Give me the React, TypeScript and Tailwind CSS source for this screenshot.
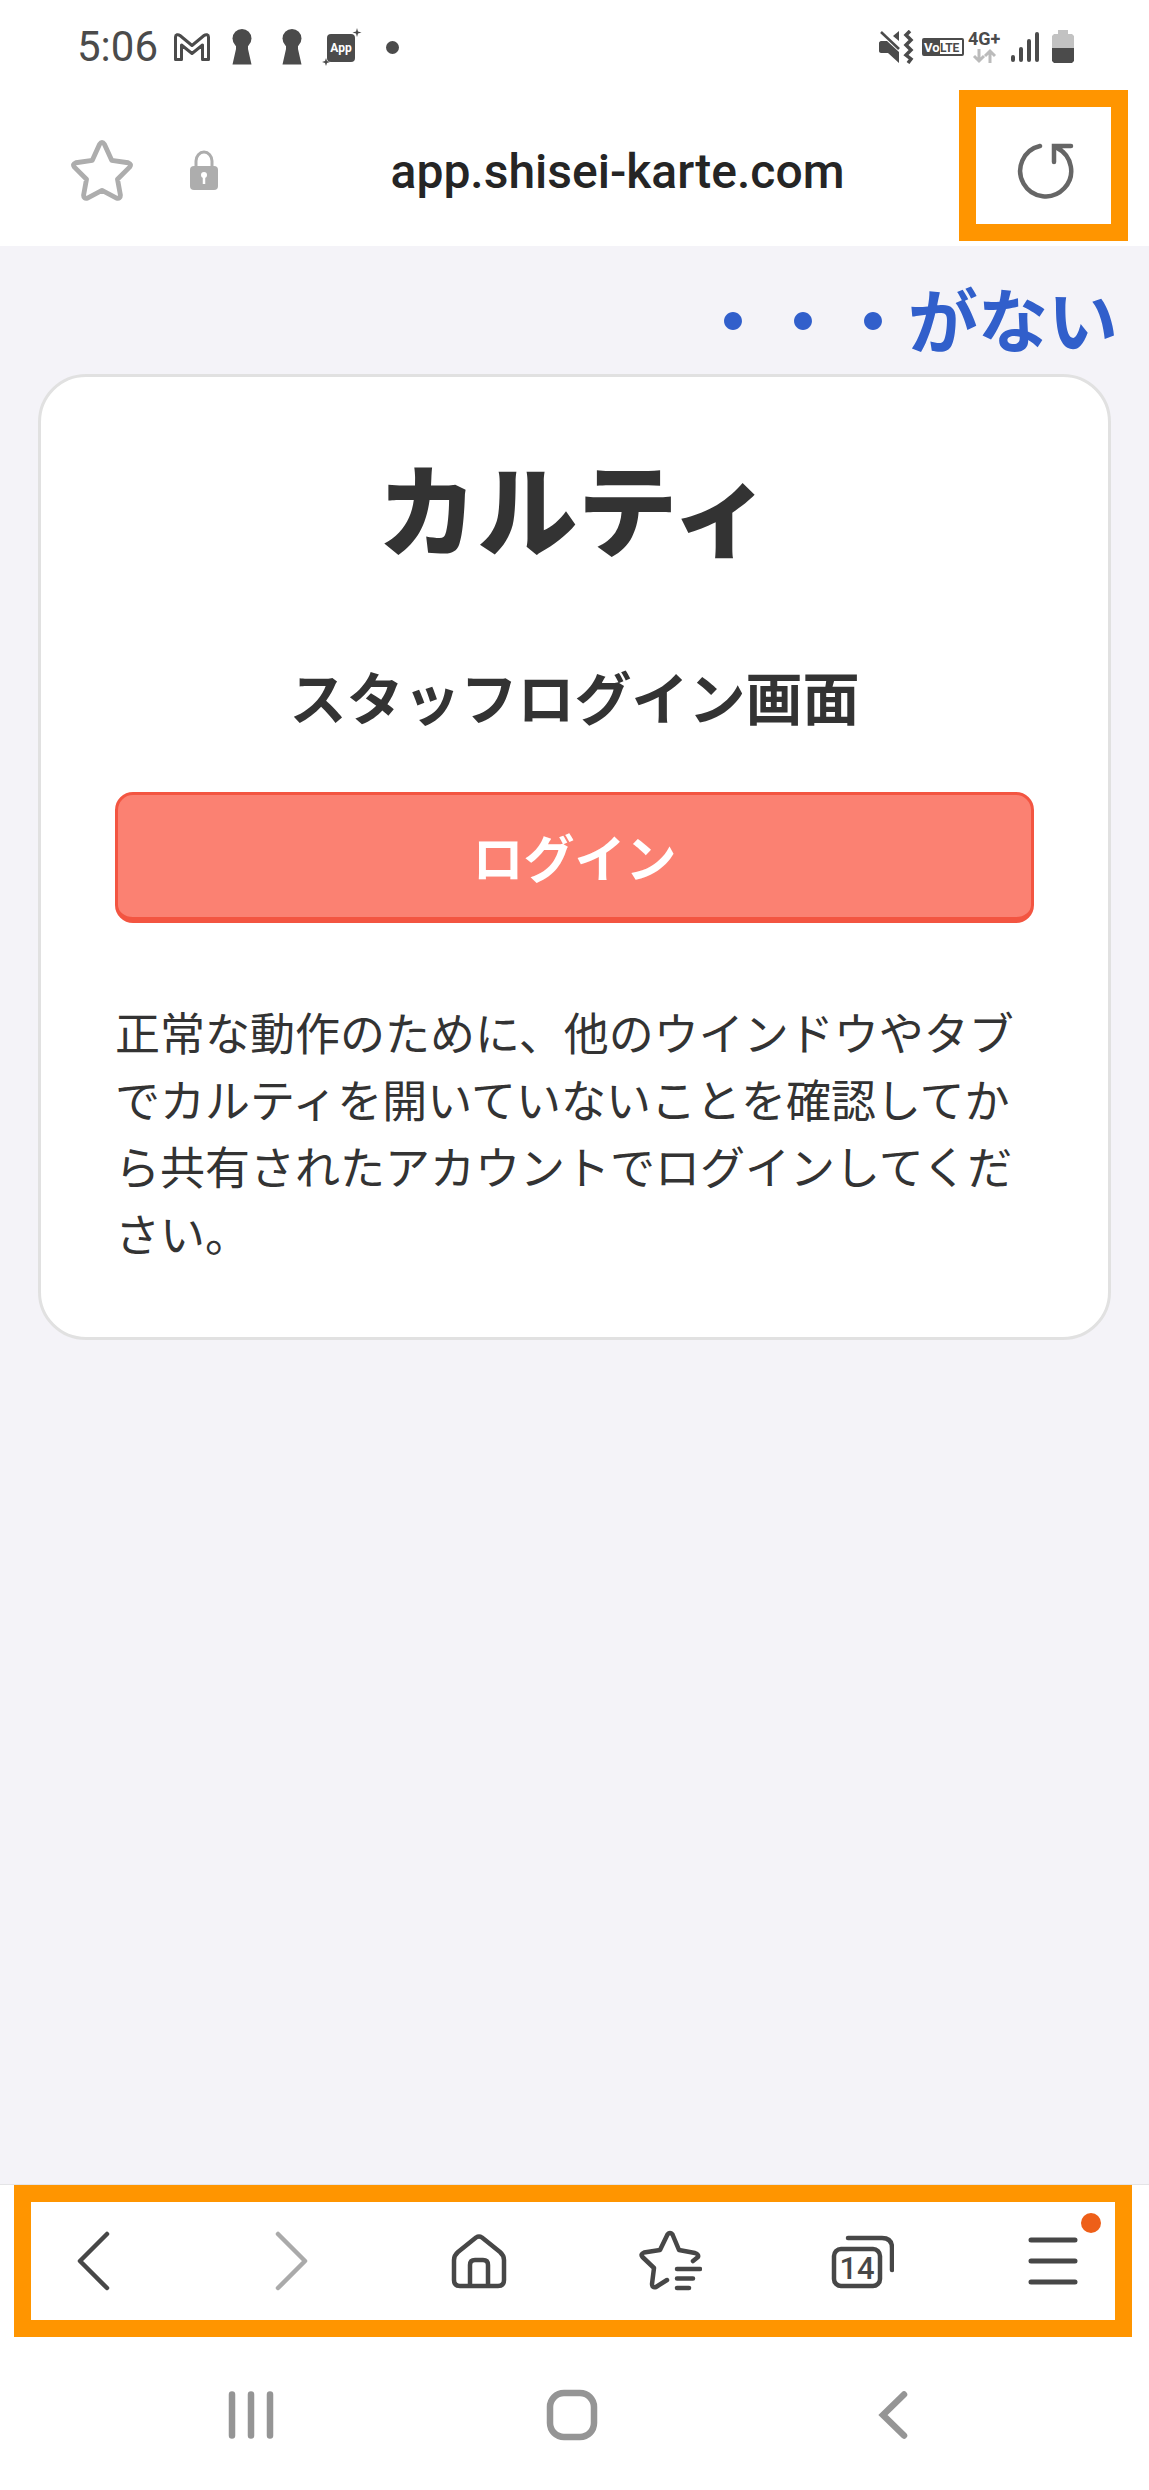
import type { ReactNode } from 'react';

interface ToolbarItem {
  label: string;
  icon: ReactNode;
}

const KeyholeIcon = () => (
  <svg width="20" height="36" viewBox="0 0 20 36" fill="#4b4b4b">
    <circle cx="10" cy="9.5" r="9.5" />
    <path d="M4 13h12v7l3.5 15.5h-19L4 20z" />
  </svg>
);

const notifications = [
  {
    name: 'mail',
    icon: (
      <svg width="36" height="28" viewBox="0 0 36 28" fill="none" stroke="#4b4b4b" strokeWidth="3" strokeLinejoin="round">
        <path d="M1.5 4v22.5h6V12l10.5 8.500L28.500 12v14.500h6V4c0-2.500-2.500-3-4.500-1.500L18 12.500 6 2.500C4 1 1.500 1.500 1.500 4z" />
      </svg>
    ),
  },
  { name: 'keyhole-1', icon: <KeyholeIcon /> },
  { name: 'keyhole-2', icon: <KeyholeIcon /> },
  {
    name: 'app',
    icon: (
      <svg width="40" height="40" viewBox="0 0 40 40" fill="#4b4b4b">
        <rect x="5" y="7" width="28" height="28" rx="4" />
        <path d="M35 1l1 3.500 3.500 1-3.500 1-1 3.500-1-3.500-3.500-1 3.500-1zM4 31l1 3 3 1-3 1-1 3-1-3-3-1 3-1z" />
        <text x="19" y="25" textAnchor="middle" fill="#fff" fontSize="12" fontWeight="700" fontFamily="Roboto, sans-serif">
          App
        </text>
      </svg>
    ),
  },
  { name: 'more', icon: <span className="size-[13px] rounded-full bg-[#4b4b4b]" /> },
];

const StatusBar = () => {
  return (
    <div className="flex h-[94px] items-center justify-between pl-[77px] pr-[75px] text-[#4b4b4b]">
      <div className="flex items-center">
        <span className="w-[90px] text-[42px] leading-none">5:06</span>
        {notifications.map((n) => (
          <span key={n.name} className="flex w-[50px] items-center justify-center">
            {n.icon}
          </span>
        ))}
      </div>
      <div className="flex items-center gap-1">
        <svg width="40" height="34" viewBox="0 0 40 34" fill="#4b4b4b">
          <path d="M1 13c0-1 1-2 2-2h6l12 11v11L10 23H3c-1 0-2-1-2-2z" />
          <path d="M21 1v10l-6-5z" />
          <path d="M3 2l18 17" stroke="#4b4b4b" strokeWidth="2.500" />
          <path d="M32 1l-4 4 5 5-5 5 5 5-5 5 5 4-3 4" fill="none" stroke="#4b4b4b" strokeWidth="3.500" />
        </svg>
        <svg width="42" height="18" viewBox="0 0 42 18" fontFamily="Roboto, sans-serif" fontWeight="700" fontSize="13">
          <rect x="1" y="1" width="40" height="16" rx="1" fill="#fff" stroke="#4b4b4b" strokeWidth="2" />
          <path d="M1 1h17v16H1z" fill="#4b4b4b" />
          <text x="2" y="14" fill="#fff">Vo</text>
          <text x="18" y="14" fill="#4b4b4b" fontSize="12">LTE</text>
        </svg>
        <svg width="36" height="40" viewBox="0 0 36 40">
          <text x="0" y="18" fill="#4b4b4b" fontFamily="Roboto, sans-serif" fontWeight="700" fontSize="18">4G+</text>
          <path d="M11 22v12M6 29l5 5 5-5M22 36V24M17 29l5-5 5 5" fill="none" stroke="#bbb" strokeWidth="3" />
        </svg>
        <svg width="40" height="32" viewBox="0 0 40 32" stroke="#4b4b4b" strokeWidth="4" strokeLinecap="round">
          <path d="M5 26v3M13 18v11M21 10v19M29 3v26" />
        </svg>
        <svg width="22" height="34" viewBox="0 0 22 34">
          <path d="M6 0h10v4h4l2 2v13H0V6l2-2h4z" fill="#c2c2c2" />
          <path d="M0 18h22v13l-2 2H2l-2-2z" fill="#4b4b4b" />
        </svg>
      </div>
    </div>
  );
};

const AddressBar = () => {
  return (
    <div className="flex h-[152px] items-center justify-between pl-[71px]">
      <div className="flex w-[205px] items-center gap-[56px]">
        <button type="button" aria-label="ブックマークに追加">
          <svg width="62" height="62" viewBox="0 0 64 64" fill="none" stroke="#adadad" strokeWidth="5" strokeLinejoin="round">
            <path d="M29.500 5.500q2.500-4 5 0L42 22l17 2.500q4 1.500 1.500 4.500L48 41.500l3 16.500q0 4-4 3L32 53l-15 8q-4 1-4-3l3-16.500L3.500 29Q1 26 5 24.500L22 22z" />
          </svg>
        </button>
        <svg width="30" height="40" viewBox="0 0 30 40" fill="none">
          <path d="M7 18v-7a8 9 0 0 1 16 0v7" stroke="#adadad" strokeWidth="3" />
          <rect x="1" y="16" width="28" height="24" rx="4" fill="#adadad" />
          <circle cx="15" cy="25" r="3" fill="#fff" />
          <path d="M15 25v9" stroke="#fff" strokeWidth="2.500" />
        </svg>
      </div>
      <p className="pt-1 text-[48px] font-medium leading-none text-[#252525]">app.shisei-karte.com</p>
      <div className="flex w-[190px] pb-[9px] pr-[21px]">
        <button
          type="button"
          aria-label="再読み込み"
          className="flex h-[151px] w-full items-center justify-center border-[17px] border-[#ff9500] bg-white pt-2"
        >
          <svg width="64" height="64" viewBox="0 0 64 64" fill="none" stroke="#666" strokeWidth="4.500" strokeLinecap="round">
            <path d="M29 8A25.500 25.500 0 1 0 46 10" />
            <path d="M43 24V8h17" />
            <path d="M43 8h12l-7 5z" fill="#666" stroke="none" />
          </svg>
        </button>
      </div>
    </div>
  );
};

const LoginCard = () => {
  return (
    <section className="mx-[38px] rounded-[48px] border-[3px] border-[#e1e1e1] bg-white px-[74px] pb-[71px] pt-[73px] text-[#333]">
      <h1 className="text-center text-[100px] font-black leading-[112px]">カルティ</h1>
      <h2 className="mt-[93px] text-center text-[57px] font-bold leading-[80px]">スタッフログイン画面</h2>
      <button
        type="button"
        className="mt-[57px] h-[131px] w-full rounded-[18px] border-[3px] border-b-[6px] border-[#f35541] bg-[#fb8172] text-[51px] font-bold text-white"
      >
        ログイン
      </button>
      <p className="mt-[75px] text-[45px] leading-[67px]">
        正常な動作のために、他のウインドウやタブでカルティを開いていないことを確認してから共有されたアカウントでログインしてください。
      </p>
    </section>
  );
};

const toolbarItems: ToolbarItem[] = [
  {
    label: '戻る',
    icon: <path d="M43 5L16 32l27 27" strokeWidth="4.500" />,
  },
  {
    label: '進む',
    icon: <path d="M23 5l27 27-27 27" stroke="#aaa" strokeWidth="4.500" />,
  },
  {
    label: 'ホーム',
    icon: (
      <>
        <path d="M29 8.500q3-2 6 0L53 23q4 3.500 4 8v20q0 6-6 6H13q-6 0-6-6V31q0-4.500 4-8z" />
        <path d="M23 56V36q0-5 5-5h8q5 0 5 5v20" />
      </>
    ),
  },
  {
    label: 'ブックマーク',
    icon: (
      <>
        <path d="M29 51l-11 7q-4 1-4-3l2-16L4.500 28Q2 25 6 23.500L22 21l7.500-15.500q2.500-3 5 0L41 21l16 3q4 1.500 3 4l-5 4" />
        <path d="M39 40h23M39 49.500h16M39 59h12" />
      </>
    ),
  },
  {
    label: 'タブ',
    icon: (
      <>
        <rect x="4" y="20" width="46" height="37" rx="7" />
        <path d="M18 9h34q10 0 10 10v22" />
        <text
          x="27"
          y="50"
          textAnchor="middle"
          fill="#474747"
          stroke="none"
          fontSize="31"
          fontWeight="500"
          fontFamily="Roboto, sans-serif"
        >
          14
        </text>
      </>
    ),
  },
  {
    label: 'メニュー',
    icon: <path d="M10 11h44M10 32h44M10 53h44" strokeWidth="5" />,
  },
];

const Toolbar = () => {
  return (
    <nav className="relative border-t border-[#e4e4e6] py-11">
      <div className="grid grid-cols-6">
        {toolbarItems.map((item) => (
          <button key={item.label} type="button" aria-label={item.label} className="flex justify-center">
            <span className="relative">
              <svg
                width="64"
                height="64"
                viewBox="0 0 64 64"
                fill="none"
                stroke="#474747"
                strokeWidth="4.500"
                strokeLinecap="round"
                strokeLinejoin="round"
              >
                {item.icon}
              </svg>
              {item.label === 'メニュー' && (
                <span className="absolute -right-4 -top-4 size-5 rounded-full bg-[#ee5f18]" />
              )}
            </span>
          </button>
        ))}
      </div>
      {/* highlight frame around the browser controls */}
      <div className="pointer-events-none absolute inset-y-0 left-[14px] right-[17px] border-[17px] border-[#ff9500]" />
    </nav>
  );
};

const SystemNav = () => {
  return (
    <div className="grid grid-cols-3 pb-[45px] pl-[90px] pr-[95px] pt-[48px]">
      <button type="button" aria-label="最近のアプリ" className="flex justify-center">
        <svg width="60" height="60" viewBox="0 0 60 60" fill="none" stroke="#959595" strokeWidth="6.500" strokeLinecap="round">
          <path d="M11 9.500v41M30 9.500v41M49 9.500v41" />
        </svg>
      </button>
      <button type="button" aria-label="ホーム画面" className="flex justify-center">
        <svg width="60" height="60" viewBox="0 0 60 60" fill="none" stroke="#959595" strokeWidth="6.500">
          <rect x="8" y="8" width="44" height="44" rx="14" />
        </svg>
      </button>
      <button type="button" aria-label="前の画面" className="flex justify-center">
        <svg width="60" height="60" viewBox="0 0 60 60" fill="none" stroke="#959595" strokeWidth="6.500" strokeLinecap="round">
          <path d="M41 9.500L20 30l21 20.500" />
        </svg>
      </button>
    </div>
  );
};

const App = () => {
  return (
    <div className="flex min-h-screen flex-col bg-white font-[Roboto,'Noto_Sans_CJK_JP',sans-serif]">
      <header>
        <StatusBar />
        <AddressBar />
      </header>
      <main className="flex-1 bg-[#f4f3f8] font-['Noto_Sans_CJK_JP',sans-serif]">
        <p className="pb-[14px] pr-[31px] pt-[30px] text-right text-[70px] font-bold leading-[84px] text-[#315fcb]">
          ・・・がない
        </p>
        <LoginCard />
      </main>
      <footer>
        <Toolbar />
        <SystemNav />
      </footer>
    </div>
  );
};

export default App;
